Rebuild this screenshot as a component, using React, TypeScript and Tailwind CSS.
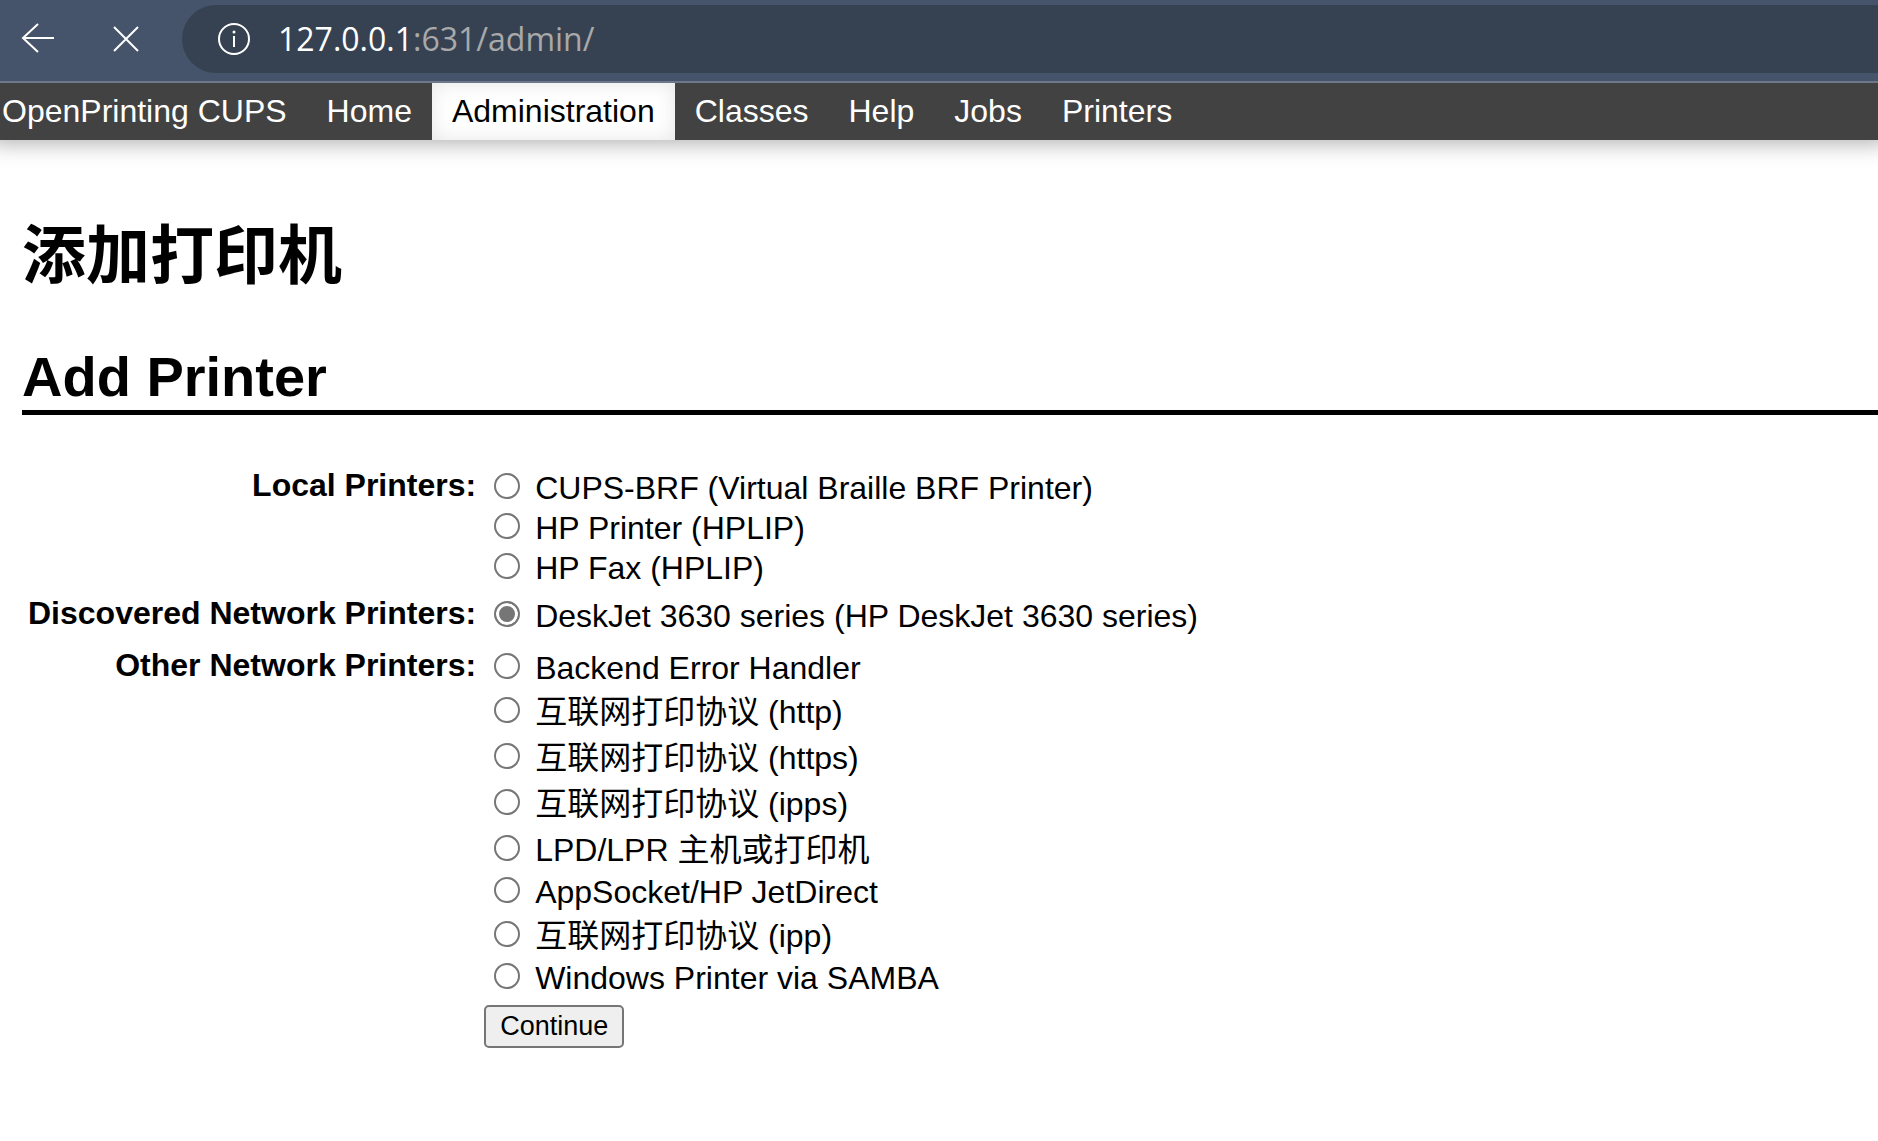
import { useState } from "react";

type Device = {
  id: string;
  label: string;
  // rows with Chinese text are a little taller
  cjk?: boolean;
};

type DeviceGroup = {
  title: string;
  devices: Device[];
};

const NAV_LINKS = ["Home", "Administration", "Classes", "Help", "Jobs", "Printers"];

const GROUPS: DeviceGroup[] = [
  {
    title: "Local Printers:",
    devices: [
      { id: "cups-brf", label: "CUPS-BRF (Virtual Braille BRF Printer)" },
      { id: "hp", label: "HP Printer (HPLIP)" },
      { id: "hpfax", label: "HP Fax (HPLIP)" },
    ],
  },
  {
    title: "Discovered Network Printers:",
    devices: [{ id: "deskjet", label: "DeskJet 3630 series (HP DeskJet 3630 series)" }],
  },
  {
    title: "Other Network Printers:",
    devices: [
      { id: "beh", label: "Backend Error Handler" },
      { id: "http", label: "互联网打印协议 (http)", cjk: true },
      { id: "https", label: "互联网打印协议 (https)", cjk: true },
      { id: "ipps", label: "互联网打印协议 (ipps)", cjk: true },
      { id: "lpd", label: "LPD/LPR 主机或打印机", cjk: true },
      { id: "socket", label: "AppSocket/HP JetDirect" },
      { id: "ipp", label: "互联网打印协议 (ipp)", cjk: true },
      { id: "smb", label: "Windows Printer via SAMBA" },
    ],
  },
];

function BrowserBar() {
  return (
    <header className="relative z-10 flex h-[83px] items-start border-b-2 border-[#6f7888] bg-[#45546a] pt-[5px] text-white">
      <button type="button" aria-label="Back" className="ml-5 mt-[15px]">
        <svg width="36" height="36" viewBox="0 0 36 36" fill="none" stroke="currentColor" strokeWidth="2">
          <path d="M34 18H3M18 4L3 18l15 14" />
        </svg>
      </button>
      <button type="button" aria-label="Stop loading" className="ml-[52px] mt-[16px]">
        <svg width="36" height="36" viewBox="0 0 36 36" fill="none" stroke="currentColor" strokeWidth="2">
          <path d="M6 6l24 24M30 6L6 30" />
        </svg>
      </button>
      <div className="ml-[38px] flex h-[68px] flex-1 items-center rounded-l-full bg-[#364252] pl-[34px]">
        <svg width="36" height="36" viewBox="0 0 36 36" fill="none" stroke="currentColor" strokeWidth="2">
          <circle cx="18" cy="18" r="15" />
          <path d="M18 15v11" />
          <circle cx="18" cy="11" r="1.5" fill="currentColor" stroke="none" />
        </svg>
        <p className="ml-[26px] font-['Open_Sans','Noto_Sans',sans-serif] text-[32px] leading-10 text-[#a9a9a9]">
          <span className="text-white">127.0.0.1</span>:631/admin/
        </p>
      </div>
    </header>
  );
}

function NavBar() {
  return (
    <nav className="flex bg-[#424242] leading-10 text-white shadow-[0_-6px_20px_10px_rgba(0,0,0,0.3)]">
      <a href="#cups" className="pb-[9px] pl-0.5 pr-5 pt-2">
        OpenPrinting CUPS
      </a>
      {NAV_LINKS.map((name) => (
        <a
          key={name}
          href={`#${name.toLowerCase()}`}
          className={
            name === "Administration"
              ? "bg-white px-5 pb-[9px] pt-2 text-black shadow-[inset_0_0_20px_rgba(0,0,0,0.1)]"
              : "px-5 pb-[9px] pt-2"
          }
        >
          {name}
        </a>
      ))}
    </nav>
  );
}

export default function App() {
  const [selected, setSelected] = useState("deskjet");

  return (
    <div className="min-h-screen overflow-x-hidden bg-white font-['Liberation_Sans','Noto_Sans_CJK_SC',sans-serif] text-[32px] text-black">
      <BrowserBar />
      <NavBar />
      <main className="pl-[22px] pt-[70px]">
        <h1 className="text-[64px] font-bold leading-[92px]">添加打印机</h1>
        <h2 className="mt-[42px] border-b-[5px] border-black text-[56px] font-bold leading-[66px]">
          Add Printer
        </h2>
        <form onSubmit={(e) => e.preventDefault()}>
          <table className="mt-[50px] leading-10">
            <tbody>
              {GROUPS.map((group) => (
                <tr key={group.title}>
                  <th scope="row" className="h-[52px] whitespace-nowrap pl-1.5 pr-2 text-right align-top font-bold">
                    {group.title}
                  </th>
                  <td className="pb-[5px] pt-[3px] align-top">
                    {group.devices.map((device) => (
                      <div
                        key={device.id}
                        className={device.cjk ? "flex items-center pb-0.5 pt-1" : "flex items-center"}
                      >
                        <input
                          type="radio"
                          name="device_uri"
                          id={device.id}
                          checked={selected === device.id}
                          onChange={() => setSelected(device.id)}
                          className="mb-1 ml-2.5 size-[26px] appearance-none rounded-full border-2 border-[#767676] bg-white checked:bg-[#767676] checked:shadow-[inset_0_0_0_3px_white]"
                        />
                        <label htmlFor={device.id} className="pl-[15px]">
                          {device.label}
                        </label>
                      </div>
                    ))}
                  </td>
                </tr>
              ))}
              <tr>
                <td />
                <td className="pt-0.5">
                  <button
                    type="submit"
                    className="block rounded-[5px] border-2 border-[#767676] bg-[#efefef] px-3.5 pb-1 pt-[3px] text-[27px] leading-8"
                  >
                    Continue
                  </button>
                </td>
              </tr>
            </tbody>
          </table>
        </form>
      </main>
    </div>
  );
}
